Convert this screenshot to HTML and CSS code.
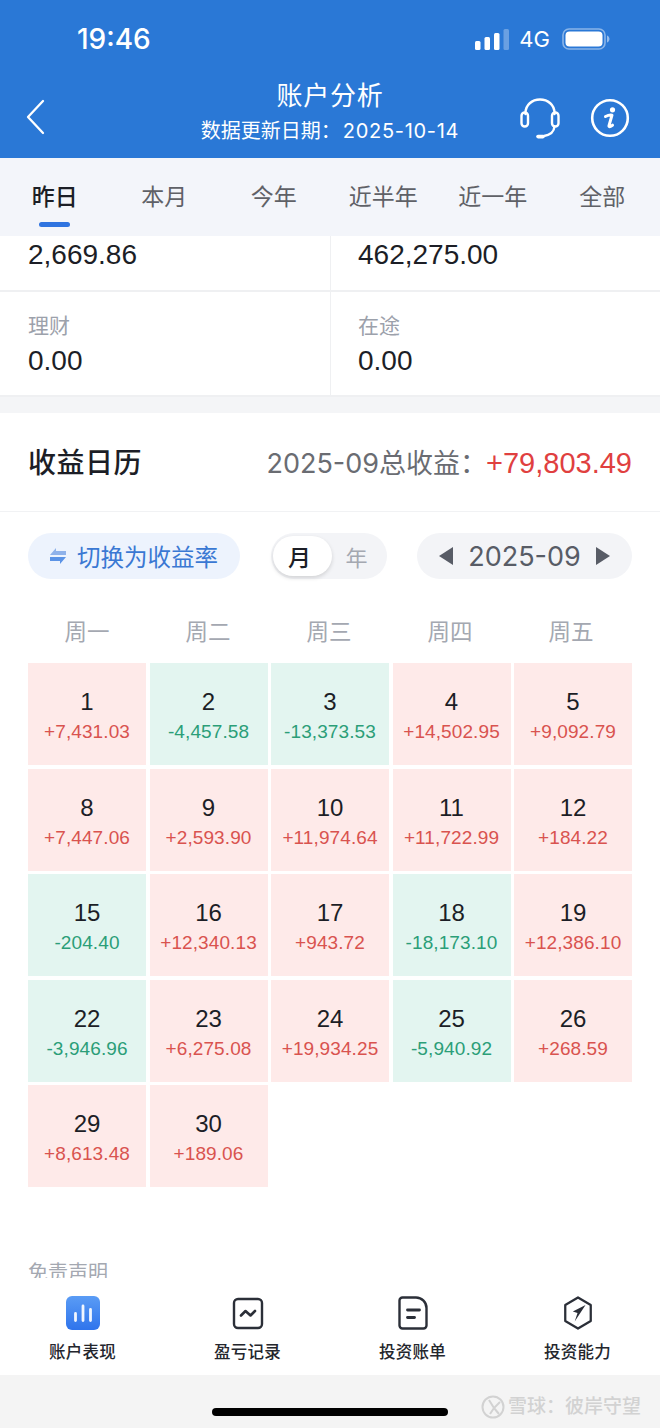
FILE: index.html
```html
<!DOCTYPE html>
<html lang="zh-CN">
<head>
<meta charset="utf-8">
<title>账户分析</title>
<link rel="stylesheet" href="styles.css">
</head>
<body>
<div class="app">
  <header class="header">
    <div class="status">
      <span class="time">19:46</span>
      <div class="status-right">
        <svg class="signal" width="34" height="21" viewBox="0 0 34 21"><rect x="0" y="12" width="5.500" height="9" rx="1.500" fill="#fff"/><rect x="9.500" y="8" width="5.500" height="13" rx="1.500" fill="#fff"/><rect x="19" y="4" width="5.500" height="17" rx="1.500" fill="#fff"/><rect x="28.500" y="0" width="5.500" height="21" rx="1.500" fill="#fff" opacity=".3"/></svg>
        <span class="net">4G</span>
        <svg class="battery" width="48" height="22" viewBox="0 0 48 22"><rect x="1" y="1" width="42" height="20" rx="6" fill="none" stroke="#fff" stroke-opacity=".45" stroke-width="1.600"/><rect x="3.500" y="3.500" width="37" height="15" rx="4" fill="#fff"/><path d="M45 7.500v7c1.600-.6 2.500-2 2.500-3.500S46.600 8.100 45 7.500z" fill="#fff" fill-opacity=".5"/></svg>
      </div>
    </div>
    <div class="bar">
      <svg class="back" width="20" height="36" viewBox="0 0 20 36"><path d="M18 2 3 18l15 16" fill="none" stroke="#fff" stroke-width="2.300" stroke-linecap="round" stroke-linejoin="round"/></svg>
      <div class="titles">
        <div class="title">账户分析</div>
        <div class="sub"><span>数据更新日期：</span><span class="sub-date">2025-10-14</span></div>
      </div>
      <div class="actions">
        <svg width="40" height="41" viewBox="0 0 40 41" fill="none" stroke="#fff" stroke-width="2.400" stroke-linecap="round"><path d="M5.500 16V15C5.500 7 12 1.500 20 1.500S34.500 7 34.500 15V16"/><rect x="1.500" y="14.500" width="6.500" height="14" rx="3.250"/><rect x="32" y="14.500" width="6.500" height="14" rx="3.250"/><path d="M34.500 28.500C34 34 30 37 24 38"/><path d="M18 38.600h5" stroke-width="3.600"/></svg>
        <svg width="40" height="40" viewBox="0 0 40 40"><circle cx="20" cy="20" r="17.800" fill="none" stroke="#fff" stroke-width="2.600"/><circle cx="22.500" cy="11.800" r="2.600" fill="#fff"/><path d="M15.500 18.500c2-1 5-1.700 6.500-1.300l-3 10.500c-.3 1.200.6 1.500 3.500-.5" fill="none" stroke="#fff" stroke-width="3" stroke-linecap="round" stroke-linejoin="round"/></svg>
      </div>
    </div>
  </header>

  <nav class="tabs">
    <span class="tab active">昨日</span>
    <span class="tab">本月</span>
    <span class="tab">今年</span>
    <span class="tab">近半年</span>
    <span class="tab">近一年</span>
    <span class="tab">全部</span>
  </nav>

  <main class="scroll">
    <section class="stats">
      <div class="stat stat-top"><span class="value">2,669.86</span></div>
      <div class="stat stat-top"><span class="value">462,275.00</span></div>
      <div class="stat"><span class="label">理财</span><span class="value">0.00</span></div>
      <div class="stat"><span class="label">在途</span><span class="value">0.00</span></div>
    </section>
    <div class="band"></div>
    <section class="cal">
      <div class="cal-head">
        <h2 class="cal-title">收益日历</h2>
        <div class="cal-total"><span class="cal-total-date">2025-09</span><span class="cal-total-label">总收益：</span><span class="cal-total-num">+79,803.49</span></div>
      </div>
      <div class="controls">
        <div class="pill switch">
          <svg width="18" height="18" viewBox="0 0 18 18"><path d="M7 1 1 8h16V4H7z" fill="#8fb2ea"/><path d="M11 17l6-7H1v4h10z" fill="#5b93e6"/></svg>
          <span>切换为收益率</span>
        </div>
        <div class="pill toggle"><span class="knob">月</span><span class="off">年</span></div>
        <div class="pill month">
          <span class="arrow-l"></span>
          <span class="month-text">2025-09</span>
          <span class="arrow-r"></span>
        </div>
      </div>
      <div class="week">
        <span>周一</span><span>周二</span><span>周三</span><span>周四</span><span>周五</span>
      </div>
      <div class="grid">
        <div class="cell up"><b>1</b><i>+7,431.03</i></div>
        <div class="cell down"><b>2</b><i>-4,457.58</i></div>
        <div class="cell down"><b>3</b><i>-13,373.53</i></div>
        <div class="cell up"><b>4</b><i>+14,502.95</i></div>
        <div class="cell up"><b>5</b><i>+9,092.79</i></div>
        <div class="cell up"><b>8</b><i>+7,447.06</i></div>
        <div class="cell up"><b>9</b><i>+2,593.90</i></div>
        <div class="cell up"><b>10</b><i>+11,974.64</i></div>
        <div class="cell up"><b>11</b><i>+11,722.99</i></div>
        <div class="cell up"><b>12</b><i>+184.22</i></div>
        <div class="cell down"><b>15</b><i>-204.40</i></div>
        <div class="cell up"><b>16</b><i>+12,340.13</i></div>
        <div class="cell up"><b>17</b><i>+943.72</i></div>
        <div class="cell down"><b>18</b><i>-18,173.10</i></div>
        <div class="cell up"><b>19</b><i>+12,386.10</i></div>
        <div class="cell down"><b>22</b><i>-3,946.96</i></div>
        <div class="cell up"><b>23</b><i>+6,275.08</i></div>
        <div class="cell up"><b>24</b><i>+19,934.25</i></div>
        <div class="cell down"><b>25</b><i>-5,940.92</i></div>
        <div class="cell up"><b>26</b><i>+268.59</i></div>
        <div class="cell up"><b>29</b><i>+8,613.48</i></div>
        <div class="cell up"><b>30</b><i>+189.06</i></div>
      </div>
      <p class="disclaimer">免责声明</p>
    </section>
  </main>

  <nav class="bottom-nav">
    <div class="nav-item">
      <svg width="34" height="34" viewBox="0 0 34 34"><defs><linearGradient id="blue" x1="0" y1="0" x2="0" y2="1"><stop offset="0" stop-color="#5a9cf5"/><stop offset="1" stop-color="#2f74ec"/></linearGradient></defs><rect width="34" height="34" rx="6" fill="url(#blue)"/><path d="M9.500 17.500v7M17 10v14.500M24.500 13.500v11" stroke="#fff" stroke-opacity=".92" stroke-width="2.800" stroke-linecap="round"/></svg>
      <span>账户表现</span>
    </div>
    <div class="nav-item">
      <svg width="34" height="34" viewBox="0 0 34 34" fill="none" stroke="#2b2f38"><rect x="3" y="3" width="28" height="29" rx="4" stroke-width="2.400"/><path d="M10 19.500l4.500-4.500 5 4.500 4.500-4.500" stroke-width="2.600" stroke-linecap="round" stroke-linejoin="round"/></svg>
      <span>盈亏记录</span>
    </div>
    <div class="nav-item">
      <svg width="34" height="34" viewBox="0 0 34 34" fill="none" stroke="#2b2f38" stroke-linecap="round"><path d="M6.500 1.500H20c6 0 10.500 5 10.500 10.500v17.500a3 3 0 0 1-3 3h-21a3 3 0 0 1-3-3V4.500a3 3 0 0 1 3-3z" stroke-width="2.400"/><path d="M11.500 14h12" stroke-width="2.800"/><path d="M11.500 21.500h7" stroke-width="2.800"/></svg>
      <span>投资账单</span>
    </div>
    <div class="nav-item">
      <svg width="34" height="36" viewBox="0 0 34 36"><path d="M17 1.500 30.500 9.500v17L17 34.500 3.500 26.500v-17z" fill="none" stroke="#2b2f38" stroke-width="2.400" stroke-linejoin="round"/><path d="M25 9.500 11.500 16.500l5 1.500-3 9z" fill="#2b2f38"/></svg>
      <span>投资能力</span>
    </div>
  </nav>

  <footer class="home">
    <span class="home-bar"></span>
    <div class="watermark">
      <svg width="24" height="24" viewBox="0 0 24 24" fill="none" stroke="#d2d2d2" stroke-width="2"><circle cx="12" cy="12" r="10.500"/><path d="M8 5l5 8-4 6M19 7l-6 6 5 6"/></svg>
      <span>雪球：彼岸守望</span>
    </div>
  </footer>
</div>
</body>
</html>
```
FILE: styles.css
```css
* { box-sizing: border-box; }
html, body { margin: 0; padding: 0; }
body {
  width: 660px;
  height: 1428px;
  overflow: hidden;
  font-family: "Liberation Sans", "Noto Sans CJK SC", sans-serif;
  color: #1c1e26;
  background: #fff;
}
.app { display: flex; flex-direction: column; height: 1428px; }

.header { background: #2a78d6; color: #fff; height: 158px; flex: none; }
.status { height: 78px; display: flex; align-items: center; justify-content: space-between; padding: 0 50px 0 77px; }
.time { font-family: Inter, "Liberation Sans", sans-serif; font-weight: 500; font-size: 28px; line-height: 1; }
.status-right { display: flex; align-items: center; gap: 10px; }
.net { font-family: Inter, "Liberation Sans", sans-serif; font-size: 22px; font-weight: 400; line-height: 1; margin-right: 2px; }
.bar { height: 80px; display: grid; grid-template-columns: 150px 1fr 150px; align-items: center; padding: 0 25px; margin-top: -1px; }
.back { display: block; }
.titles { white-space: nowrap; display: flex; flex-direction: column; align-items: center; margin-top: -9px; }
.title { font-size: 26px; line-height: 36px; letter-spacing: .8px; }
.sub { font-size: 20px; line-height: 32px; margin-top: 1px; }
.sub-date { font-family: Inter, "Liberation Sans", sans-serif; font-size: 20px; letter-spacing: .7px; margin-left: 2px; }
.actions { display: flex; justify-content: flex-end; gap: 30px; align-items: center; margin-top: 2px; margin-right: 5px; }

.tabs { height: 78px; flex: none; background: #f3f5fa; display: grid; grid-template-columns: repeat(6, 1fr); padding-right: 3px; align-items: center; }
.tab { position: relative; text-align: center; font-size: 23px; line-height: 78px; color: #5f6167; }
.tab.active { color: #1c1e26; font-weight: 500; }
.tab.active::after { content: ""; position: absolute; left: 50%; bottom: 9px; width: 31px; height: 5px; margin-left: -15.500px; border-radius: 3px; background: #2f74e0; }

.scroll { flex: 1; min-height: 0; overflow: hidden; }

.stats { display: grid; grid-template-columns: 330px 330px; background: #fff; }
.stat { display: flex; flex-direction: column; padding: 19px 28px 0; height: 105px; border-bottom: 2px solid #eff0f2; }
.stat:nth-child(even) { border-left: 1px solid #eff0f2; padding-left: 27px; }
.stat-top { height: 56px; padding-top: 0; }
.value { font-size: 28px; line-height: 38px; color: #1c1e26; }
.label { font-size: 21px; line-height: 30px; margin-bottom: 1px; color: #9ca1ab; }
.band { height: 16px; background: #f4f5f7; }

.cal { background: #fff; }
.cal-head { height: 99px; display: flex; align-items: center; justify-content: space-between; padding: 0 28px 2px; border-bottom: 1px solid #f1f2f4; }
.cal-title { margin: 0; font-size: 28px; font-weight: 500; letter-spacing: .5px; color: #1c1e26; }
.cal-total { font-size: 27px; display: flex; align-items: baseline; color: #6a6c72; }
.cal-total-date { font-family: Inter, "Liberation Sans", sans-serif; font-size: 27px; }
.cal-total-num { color: #e0403f; font-size: 29px; margin-left: -1px; }

.controls { display: flex; align-items: center; padding: 21px 28px 0; height: 67px; }
.pill { height: 46px; border-radius: 23px; display: flex; align-items: center; flex: none; }
.switch { width: 212px; background: #edf3fd; color: #3a78d3; font-size: 23.500px; padding-left: 21px; gap: 10px; }
.toggle { width: 116px; margin-left: 31px; background: #f3f4f7; padding: 3px 2px; }
.knob { width: 59px; height: 40px; border-radius: 20px; background: #fff; box-shadow: 0 2px 4px rgba(0,0,0,.14); display: flex; align-items: center; justify-content: center; font-size: 23px; font-weight: 500; color: #1c1e26; padding-right: 6px; }
.off { flex: 1; text-align: center; font-size: 22px; color: #a4a8b1; padding-right: 4px; }
.month { width: 215px; margin-left: 30px; background: #f3f4f7; justify-content: space-between; padding: 0 22px; color: #585c66; }
.month-text { font-family: Inter, "Liberation Sans", sans-serif; font-size: 27px; line-height: 1; }
.arrow-l, .arrow-r { width: 0; height: 0; border-top: 9px solid transparent; border-bottom: 9px solid transparent; }
.arrow-l { border-right: 14px solid #585c66; }
.arrow-r { border-left: 14px solid #585c66; }

.week { display: grid; grid-template-columns: repeat(5, 118px); column-gap: 3px; padding: 18px 28px 0; height: 84px; align-items: center; text-align: center; font-size: 22.500px; color: #a4a8b1; }

.grid { display: grid; grid-template-columns: repeat(5, 118px); gap: 3.500px; padding: 0 28px; }
.cell { height: 102px; display: flex; flex-direction: column; align-items: center; padding-top: 24px; }
.cell b { font-weight: 400; font-size: 24px; line-height: 30px; color: #1c1e26; }
.cell i { font-style: normal; font-size: 19px; line-height: 30px; letter-spacing: .1px; }
.up { background: #feeae9; }
.up i { color: #d9534f; }
.down { background: #e3f5f0; }
.down i { color: #2b9e78; }

.disclaimer { margin: 72px 0 0; padding: 0 28px; font-size: 20px; line-height: 28px; color: #a4a8b1; }

.bottom-nav { height: 97px; flex: none; background: #fff; display: grid; grid-template-columns: repeat(4, 165px); position: relative; }
.nav-item { display: flex; flex-direction: column; align-items: center; padding-top: 18px; }
.nav-item svg { display: block; height: 34px; }
.nav-item span { margin-top: 10px; font-size: 16.500px; line-height: 24px; font-weight: 500; color: #24262d; letter-spacing: .2px; }

.home { height: 53px; flex: none; background: #f4f4f4; position: relative; display: flex; justify-content: center; }
.home-bar { width: 236px; height: 8px; margin-top: 33px; border-radius: 4px; background: #000; }
.watermark { position: absolute; right: 19px; top: 20px; display: flex; align-items: center; gap: 3px; color: #d2d2d2; font-size: 19px; line-height: 24px; font-weight: 500; white-space: nowrap; }
```
